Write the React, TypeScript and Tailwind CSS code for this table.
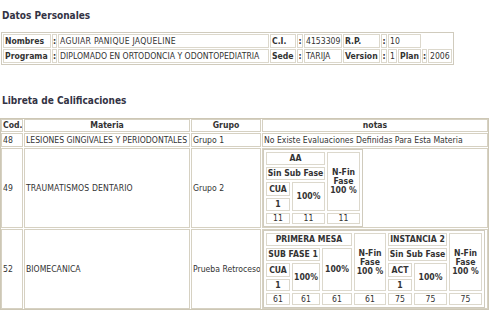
import React from "react";

const FONT = "'DejaVu Sans Condensed', 'DejaVu Sans', sans-serif";

function PCell({ children, bold, center, span2, className = "" }: { children?: React.ReactNode; bold?: boolean; center?: boolean; span2?: boolean; className?: string }) {
  return (
    <div
      className={
        "border border-[#dcd8cc] bg-white flex items-center overflow-hidden whitespace-nowrap leading-[12px] " +
        (bold ? "font-bold " : "") +
        (center ? "justify-center px-0 " : "px-px ") +
        (span2 ? "col-span-2 " : "") +
        className
      }
    >
      {children}
    </div>
  );
}

function NCell({ children, className = "", bold = true }: { children?: React.ReactNode; className?: string; bold?: boolean }) {
  return (
    <div
      className={
        "border border-[#dcd8cc] bg-white flex items-center justify-center text-center leading-[9px] whitespace-nowrap " +
        (bold ? "font-bold " : "") +
        className
      }
    >
      {children}
    </div>
  );
}

function NFin({ className = "" }: { className?: string }) {
  return (
    <NCell className={"leading-[9.5px] " + className}>
      <span>
        N-Fin
        <br />
        Fase
        <br />
        100 %
      </span>
    </NCell>
  );
}

function MCell({ children, className = "" }: { children?: React.ReactNode; className?: string }) {
  return (
    <div className={"border border-[#d6d1c2] bg-white flex items-center whitespace-nowrap overflow-hidden px-px " + className}>
      {children}
    </div>
  );
}

export default function App() {
  return (
    <div
      className="w-[502px] h-[314px] bg-white overflow-hidden text-[#333333] text-[8.6px] pt-[10px]"
      style={{ fontFamily: FONT }}
    >
      <div className="h-[12px] leading-[12px] text-[10px] font-bold pl-[2px] text-[#333344]">Datos Personales</div>

      <div className="mt-[10px] ml-px w-fit grid grid-cols-[48px_5px_211px_26px_6px_38px_37px_6px_9px_23px_5px_24px] grid-rows-[14px_14px] gap-px p-px border border-[#d0cbbd] bg-white">
        <PCell bold>Nombres</PCell>
        <PCell bold center>:</PCell>
        <PCell className="tracking-[0.25px]">AGUIAR PANIQUE JAQUELINE</PCell>
        <PCell bold>C.I.</PCell>
        <PCell bold center>:</PCell>
        <PCell>4153309</PCell>
        <PCell bold>R.P.</PCell>
        <PCell bold center>:</PCell>
        <PCell span2>10</PCell>
        <div className="col-span-2" />

        <PCell bold>Programa</PCell>
        <PCell bold center>:</PCell>
        <PCell>DIPLOMADO EN ORTODONCIA Y ODONTOPEDIATRIA</PCell>
        <PCell bold>Sede</PCell>
        <PCell bold center>:</PCell>
        <PCell>TARIJA</PCell>
        <PCell bold>Version</PCell>
        <PCell bold center>:</PCell>
        <PCell>1</PCell>
        <PCell bold>Plan</PCell>
        <PCell bold center>:</PCell>
        <PCell>2006</PCell>
      </div>

      <div className="mt-[30px] h-[12px] leading-[12px] text-[10px] font-bold pl-[2px] text-[#333344]">Libreta de Calificaciones</div>

      <div className="mt-[11px] w-fit grid grid-cols-[22px_166px_70px_226px] gap-px border border-[#cdc7b5] bg-white">
        {/* header */}
        <MCell className="h-[13px] font-bold leading-[11px]">Cod.</MCell>
        <MCell className="h-[13px] font-bold leading-[11px] justify-center">Materia</MCell>
        <MCell className="h-[13px] font-bold leading-[11px] justify-center">Grupo</MCell>
        <MCell className="h-[13px] font-bold leading-[11px] justify-center">notas</MCell>

        {/* 48 */}
        <MCell className="h-[14px]">48</MCell>
        <MCell className="h-[14px]">LESIONES GINGIVALES Y PERIODONTALES</MCell>
        <MCell className="h-[14px]">Grupo 1</MCell>
        <MCell className="h-[14px]">No Existe Evaluaciones Definidas Para Esta Materia</MCell>

        {/* 49 */}
        <MCell>49</MCell>
        <MCell className="tracking-[0.15px]">TRAUMATISMOS DENTARIO</MCell>
        <MCell>Grupo 2</MCell>
        <div className="border border-[#d6d1c2] bg-white">
          <div className="w-fit grid grid-cols-[24px_33px_33px] grid-rows-[13px_13px_14px_13px_11px] gap-[2px] p-[2px] border border-[#d0cbbd]">
            <NCell className="col-span-2">AA</NCell>
            <NFin className="row-span-4" />
            <NCell className="col-span-2">Sin Sub Fase</NCell>
            <NCell>CUA</NCell>
            <NCell className="row-span-2">100%</NCell>
            <NCell>1</NCell>
            <NCell bold={false}>11</NCell>
            <NCell bold={false}>11</NCell>
            <NCell bold={false}>11</NCell>
          </div>
        </div>

        {/* 52 */}
        <MCell>52</MCell>
        <MCell>BIOMECANICA</MCell>
        <MCell>Prueba Retroceso</MCell>
        <div className="border border-[#d6d1c2] bg-white">
          <div className="w-fit grid grid-cols-[24px_28px_30px_32px_24px_33px_33px] grid-rows-[13px_13px_14px_12px_12px] gap-[2px] p-[2px] border border-[#d0cbbd]">
            <NCell className="col-start-1 col-span-3 row-start-1">PRIMERA MESA</NCell>
            <NFin className="col-start-4 row-start-1 row-span-4" />
            <NCell className="col-start-5 col-span-2 row-start-1">INSTANCIA 2</NCell>
            <NFin className="col-start-7 row-start-1 row-span-4" />
            <NCell className="col-start-1 col-span-2 row-start-2">SUB FASE 1</NCell>
            <NCell className="col-start-3 row-start-2 row-span-3">100%</NCell>
            <NCell className="col-start-5 col-span-2 row-start-2">Sin Sub Fase</NCell>
            <NCell className="col-start-1 row-start-3">CUA</NCell>
            <NCell className="col-start-1 row-start-4">1</NCell>
            <NCell className="col-start-2 row-start-3 row-span-2">100%</NCell>
            <NCell className="col-start-5 row-start-3">ACT</NCell>
            <NCell className="col-start-5 row-start-4">1</NCell>
            <NCell className="col-start-6 row-start-3 row-span-2">100%</NCell>
            <NCell bold={false} className="col-start-1 row-start-5">61</NCell>
            <NCell bold={false} className="col-start-2 row-start-5">61</NCell>
            <NCell bold={false} className="col-start-3 row-start-5">61</NCell>
            <NCell bold={false} className="col-start-4 row-start-5">61</NCell>
            <NCell bold={false} className="col-start-5 row-start-5">75</NCell>
            <NCell bold={false} className="col-start-6 row-start-5">75</NCell>
            <NCell bold={false} className="col-start-7 row-start-5">75</NCell>
          </div>
        </div>
      </div>
    </div>
  );
}
